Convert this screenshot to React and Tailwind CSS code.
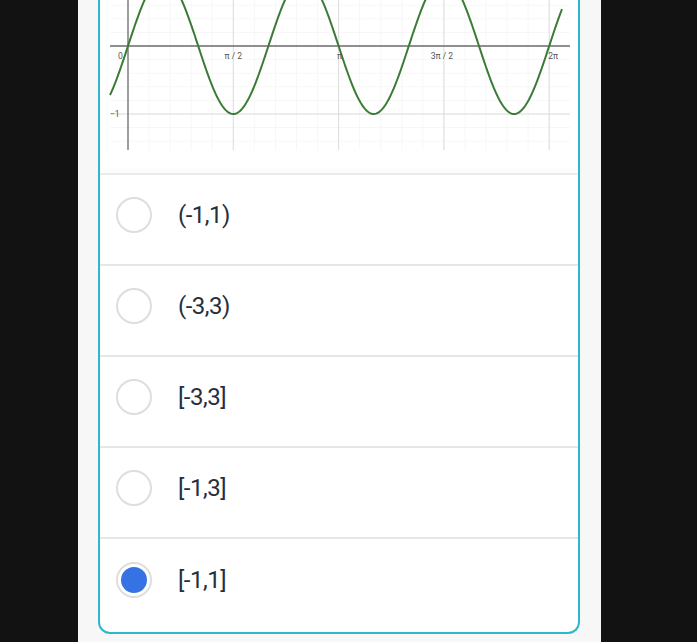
import React from "react";

const options = [
  { label: "(-1,1)", checked: false },
  { label: "(-3,3)", checked: false },
  { label: "[-3,3]", checked: false },
  { label: "[-1,3]", checked: false },
  { label: "[-1,1]", checked: true },
];

// graph constants (svg coords)
const OX = 28;
const OY = 46;
const HALF_PI = 105.3;
const UNIT_Y = 68;

function curvePath() {
  const pts = [];
  for (let px = 10; px <= 462; px += 1) {
    const t = ((px - OX) / HALF_PI) * (Math.PI / 2);
    const y = OY - Math.sin(3 * t) * UNIT_Y;
    pts.push(`${px === 10 ? "M" : "L"}${px},${y.toFixed(2)}`);
  }
  return pts.join(" ");
}

function Graph() {
  const minorX = [];
  for (let x = OX - HALF_PI / 5; x <= 470; x += HALF_PI / 5) minorX.push(x);
  const minorY = [];
  for (let y = OY - UNIT_Y; y <= 150; y += UNIT_Y / 5) minorY.push(y);
  const majors = [1, 2, 3, 4].map((k) => OX + HALF_PI * k);

  return (
    <svg width="478" height="173" viewBox="0 0 478 173" className="block">
      {minorX.map((x, i) => (
        <line key={"mx" + i} x1={x} y1="0" x2={x} y2="150" stroke="#f7f7f7" strokeWidth="1" />
      ))}
      {minorY.map((y, i) => (
        <line key={"my" + i} x1="10" y1={y} x2="470" y2={y} stroke="#f7f7f7" strokeWidth="1" />
      ))}
      {majors.map((x, i) => (
        <line key={"M" + i} x1={x} y1="0" x2={x} y2="150" stroke="#dcdcdc" strokeWidth="1" />
      ))}
      <line x1="10" y1={OY + UNIT_Y} x2="470" y2={OY + UNIT_Y} stroke="#dcdcdc" strokeWidth="1" />
      <line x1={OX} y1="0" x2={OX} y2="150" stroke="#6b6b6b" strokeWidth="1.3" />
      <line x1="10" y1={OY} x2="470" y2={OY} stroke="#6b6b6b" strokeWidth="1.3" />
      <path d={curvePath()} fill="none" stroke="#3b7b36" strokeWidth="2" />
      <g fontFamily="Roboto, sans-serif" fontSize="8.5" fill="#555">
        <text x="18" y="59">0</text>
        <text x={majors[0]} y="59" textAnchor="middle">π / 2</text>
        <text x={majors[1] + 1} y="59" textAnchor="middle">π</text>
        <text x={majors[2] - 2} y="59" textAnchor="middle">3π / 2</text>
        <text x={majors[3] + 4} y="59" textAnchor="middle">2π</text>
        <text x="10" y="117">−1</text>
      </g>
    </svg>
  );
}

function Radio({ checked }) {
  return (
    <div className="flex h-[36px] w-[36px] shrink-0 items-center justify-center rounded-full border-2 border-[#dedede] bg-white">
      {checked && <div className="h-[26px] w-[26px] rounded-full bg-[#3573e4]" />}
    </div>
  );
}

export default function App() {
  return (
    <div className="flex h-[642px] w-[697px] overflow-hidden bg-[#121212]" style={{ fontFamily: "Roboto, 'Noto Sans', sans-serif" }}>
      <div className="w-[78px] shrink-0" />
      <div className="flex w-[523px] shrink-0 flex-col bg-[#f7f7f7] pl-[20px] pr-[21px]">
        <div className="flex flex-col overflow-hidden rounded-b-[12px] border-x-2 border-b-2 border-[#2fb7c9] bg-white">
          <Graph />
          <div className="h-[2px] bg-[#ebebeb] shadow-[0_-3px_4px_rgba(0,0,0,0.05)]" />
          {options.map((o, i) => (
            <div
              key={o.label}
              className={`flex items-center gap-[26px] pl-[16px] ${
                i < options.length - 1 ? "h-[91px] pb-[10px] border-b-2 border-[#e6e6e6]" : "h-[93px] pb-[12px]"
              }`}
            >
              <Radio checked={o.checked} />
              <span className="text-[24px] leading-none tracking-[-0.5px] text-[#26303d]">{o.label}</span>
            </div>
          ))}
        </div>
      </div>
      <div className="flex-1" />
    </div>
  );
}
